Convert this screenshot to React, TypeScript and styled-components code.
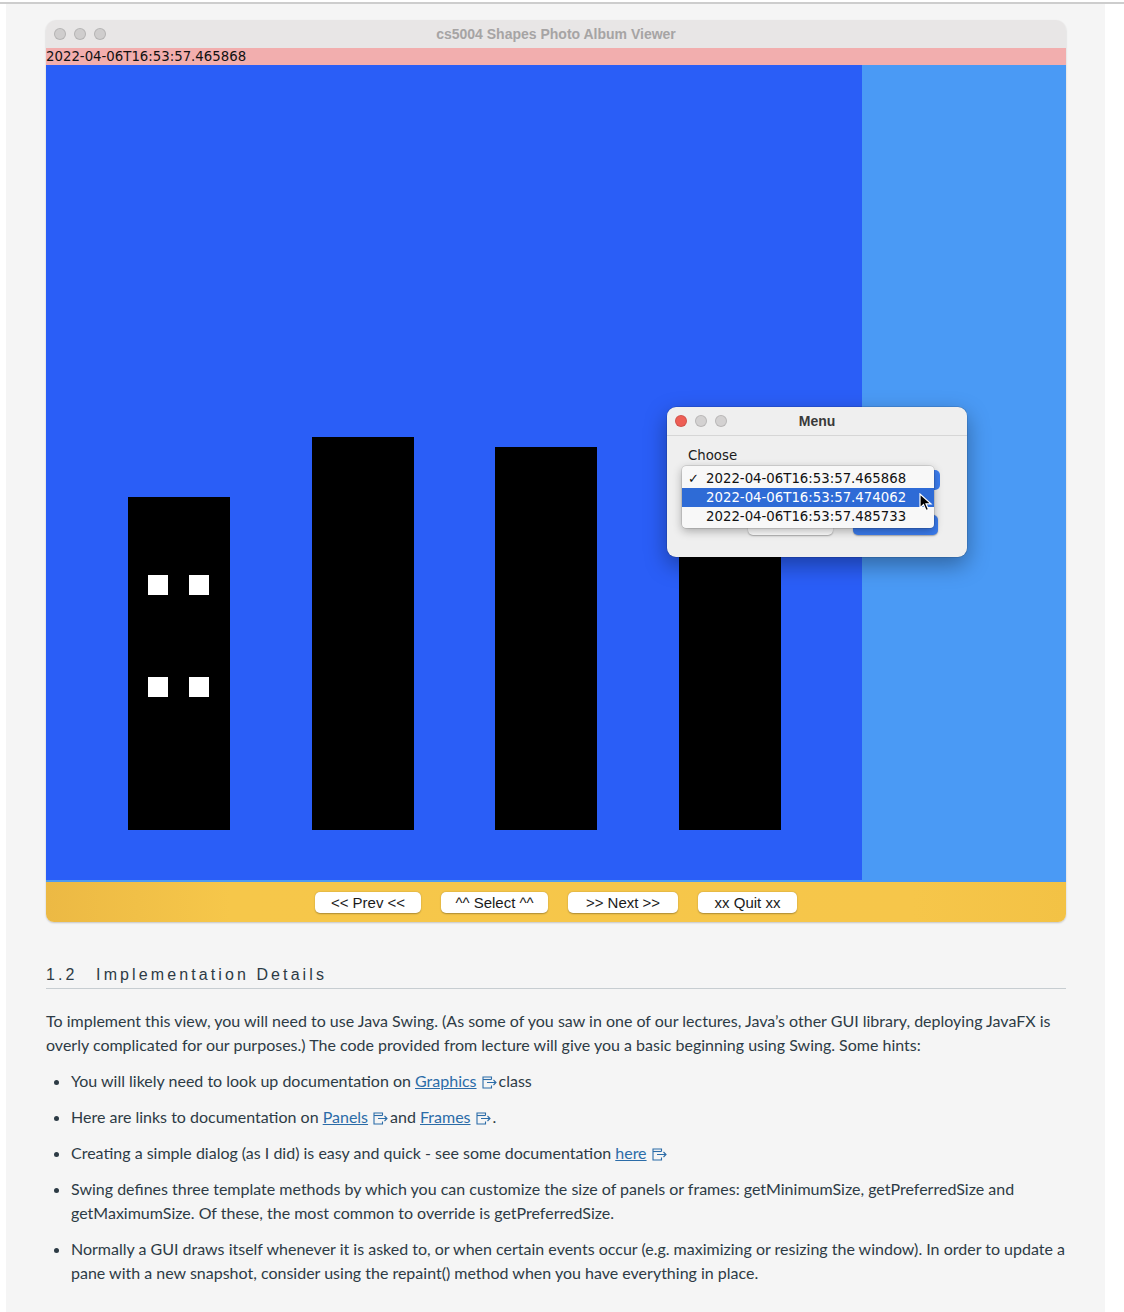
import React from "react";
import styled, { createGlobalStyle } from "styled-components";

const GlobalStyle = createGlobalStyle`
  html, body { margin: 0; padding: 0; background: #ffffff; }
  body { font-family: "Liberation Sans", Arial, sans-serif; }
  * { box-sizing: border-box; }
`;

const TopRule = styled.div`
  height: 2px;
  margin-top: 2px;
  background: #cdcdcd;
`;

const Panel = styled.main`
  margin-left: 6px;
  width: 1099px;
  min-height: calc(100vh - 4px);
  background: #f5f5f5;
  padding: 16px 39px 24px 40px;
`;

const Window = styled.div`
  width: 1020px;
  height: 902px;
  display: flex;
  flex-direction: column;
  border-radius: 10px 10px 8px 8px;
  overflow: hidden;
  box-shadow: 0 1px 2px rgba(0, 0, 0, 0.2);
`;

const TitleBar = styled.div`
  height: 28px;
  flex: none;
  background: #e8e6e6;
  display: flex;
  align-items: center;
  padding-left: 8px;
`;

const Lights = styled.div`
  display: flex;
  gap: 8px;
`;

const Light = styled.span<{ $color: string }>`
  width: 12px;
  height: 12px;
  border-radius: 50%;
  background: ${(p) => p.$color};
  border: 0.5px solid rgba(0, 0, 0, 0.12);
`;

const WindowTitle = styled.div`
  flex: 1;
  text-align: center;
  margin-right: 60px;
  font-size: 14px;
  font-weight: bold;
  color: #a6a4a4;
`;

const StatusBar = styled.div`
  height: 17px;
  flex: none;
  background: #f2aeae;
  font-family: "DejaVu Sans", sans-serif;
  font-size: 13.3px;
  line-height: 17px;
  color: #111;
`;

const Canvas = styled.div`
  flex: 1;
  display: grid;
  grid-template-columns: 816px 1fr;
  position: relative;
  border-bottom: 2px solid #4e9af2;
`;

const Scene = styled.div`
  background: #2a5ef7;
  display: flex;
  align-items: flex-end;
  gap: 81.5px;
  padding: 0 0 50px 82px;
`;

const SideArea = styled.div`
  background: #4a9af5;
`;

const Building = styled.div<{ $h: number }>`
  width: 102px;
  height: ${(p) => p.$h}px;
  background: #000;
  flex: none;
`;

const Windows = styled.div`
  display: grid;
  grid-template-columns: 20px 20px;
  grid-auto-rows: 20px;
  column-gap: 21px;
  row-gap: 82px;
  padding: 78px 0 0 20px;
`;

const Pane = styled.span`
  background: #fff;
`;

const BottomBar = styled.div`
  height: 40px;
  flex: none;
  background: linear-gradient(90deg, #ecb944 0%, #f6c74a 18%, #f6c64a 85%, #f3c245 100%);
  display: flex;
  justify-content: center;
  align-items: center;
  gap: 20px;
`;

const SwingButton = styled.button<{ $w: number }>`
  width: ${(p) => p.$w}px;
  height: 21px;
  border: none;
  border-radius: 5px;
  background: #ffffff;
  box-shadow: 0 0.5px 1.5px rgba(0, 0, 0, 0.3);
  font-family: "Liberation Sans", Arial, sans-serif;
  font-size: 15px;
  color: #1a1a1a;
  padding: 0;
`;

/* dialog overlay */
const Dialog = styled.div`
  position: absolute;
  left: 621px;
  top: 342px;
  width: 300px;
  height: 150px;
  background: #efefef;
  border-radius: 9px;
  box-shadow: 0 8px 22px rgba(0, 0, 0, 0.35), 0 0 0 0.5px rgba(0, 0, 0, 0.2);
`;

const DialogTitle = styled.div`
  height: 29px;
  display: flex;
  align-items: center;
  padding-left: 8px;
  border-bottom: 1px solid #d6d6d6;
`;

const DialogTitleText = styled.div`
  flex: 1;
  text-align: center;
  margin-right: 60px;
  font-size: 14px;
  font-weight: bold;
  color: #3a3a3a;
`;

const DialogBody = styled.div`
  padding: 11px 21px 0 21px;
  display: flex;
  flex-direction: column;
`;

const ChooseLabel = styled.div`
  font-family: "DejaVu Sans", sans-serif;
  font-size: 13.3px;
  color: #1c1c1c;
  line-height: 18px;
`;

const Combo = styled.div`
  margin: 5px 0 0 -6px;
  width: 258px;
  height: 20px;
  display: flex;
  justify-content: flex-end;
`;

const ComboArrow = styled.div`
  width: 16px;
  height: 20px;
  border-radius: 0 5px 5px 0;
  background: #3d7ef0;
`;

const DialogButtons = styled.div`
  margin-top: 25px;
  display: flex;
  gap: 20px;
  padding-left: 60px;
`;

const DlgButton = styled.div<{ $primary?: boolean }>`
  width: 85px;
  height: 20px;
  border-radius: 5px;
  background: ${(p) => (p.$primary ? "#3a7bed" : "#ffffff")};
  box-shadow: 0 0.5px 1.5px rgba(0, 0, 0, 0.3);
`;

const PopupList = styled.div`
  position: absolute;
  left: 15px;
  top: 59px;
  width: 252px;
  padding: 3px 0 2px;
  background: #f8f8f8;
  border-radius: 4px;
  box-shadow: 0 3px 10px rgba(0, 0, 0, 0.3), 0 0 0 0.5px rgba(0, 0, 0, 0.2);
`;

const ListRow = styled.div<{ $active?: boolean }>`
  height: 19px;
  display: flex;
  align-items: center;
  background: ${(p) => (p.$active ? "#2e6bd6" : "transparent")};
  color: ${(p) => (p.$active ? "#ffffff" : "#111111")};
  font-family: "DejaVu Sans", sans-serif;
  font-size: 13.3px;
`;

const Check = styled.span`
  width: 24px;
  padding-left: 6px;
  font-size: 13px;
`;

const Cursor = styled.svg`
  position: absolute;
  left: 252px;
  top: 86px;
`;

/* article */
const Heading = styled.h3`
  margin: 43px 0 0;
  padding-bottom: 3px;
  border-bottom: 1px solid #c7cdd1;
  font-family: "Liberation Sans", Arial, sans-serif;
  font-weight: normal;
  font-size: 16px;
  line-height: 20px;
  letter-spacing: 3.1px;
  color: #2d3b45;
`;

const SectionNum = styled.span`
  margin-right: 11px;
`;

const Paragraph = styled.p`
  margin: 20px 0 0;
  font-family: Lato, "Open Sans", sans-serif;
  font-size: 16px;
  line-height: 24px;
  color: #2d3b45;
`;

const List = styled.ul`
  margin: 12px 0 0;
  padding-left: 25px;
  font-family: Lato, "Open Sans", sans-serif;
  font-size: 16px;
  line-height: 24px;
  color: #2d3b45;
  li { margin-bottom: 12px; }
`;

const Link = styled.a`
  color: #2b6ca8;
  text-decoration: underline;
`;

const ExtIcon = styled.svg`
  margin: 0 1px 0 5px;
  vertical-align: -2px;
`;

const External = () => (
  <ExtIcon width="16" height="13" viewBox="0 0 16 13" fill="none" stroke="#2b6ca8" strokeWidth="1.1">
    <path d="M9.5 3.5 V1 H1 V12 H9.5 V9.5" />
    <path d="M1 3.5 H9.5" />
    <path d="M5 6.5 H14 M11.5 4 L14 6.5 L11.5 9" />
  </ExtIcon>
);

const ExtLink: React.FC<{ children: React.ReactNode }> = ({ children }) => (
  <>
    <Link href="#">{children}</Link>
    <Link href="#">
      <External />
    </Link>
  </>
);

const buttons = [
  { label: "<< Prev <<", w: 106 },
  { label: "^^ Select ^^", w: 107 },
  { label: ">> Next >>", w: 110 },
  { label: "xx Quit xx", w: 99 },
];

const stamps = [
  "2022-04-06T16:53:57.465868",
  "2022-04-06T16:53:57.474062",
  "2022-04-06T16:53:57.485733",
];

export default function App() {
  return (
    <>
      <GlobalStyle />
      <TopRule />
      <Panel>
        <Window>
          <TitleBar>
            <Lights>
              <Light $color="#cfcdcd" />
              <Light $color="#cfcdcd" />
              <Light $color="#cfcdcd" />
            </Lights>
            <WindowTitle>cs5004 Shapes Photo Album Viewer</WindowTitle>
          </TitleBar>
          <StatusBar>2022-04-06T16:53:57.465868</StatusBar>
          <Canvas>
            <Scene>
              <Building $h={333}>
                <Windows>
                  <Pane />
                  <Pane />
                  <Pane />
                  <Pane />
                </Windows>
              </Building>
              <Building $h={393} />
              <Building $h={383} />
              <Building $h={300} />
            </Scene>
            <SideArea />
            <Dialog>
              <DialogTitle>
                <Lights>
                  <Light $color="#ee5e55" />
                  <Light $color="#d3d1d1" />
                  <Light $color="#d3d1d1" />
                </Lights>
                <DialogTitleText>Menu</DialogTitleText>
              </DialogTitle>
              <DialogBody>
                <ChooseLabel>Choose</ChooseLabel>
                <Combo>
                  <ComboArrow />
                </Combo>
                <DialogButtons>
                  <DlgButton />
                  <DlgButton $primary />
                </DialogButtons>
              </DialogBody>
              <PopupList>
                {stamps.map((s, i) => (
                  <ListRow key={s} $active={i === 1}>
                    <Check>{i === 0 ? "✓" : ""}</Check>
                    {s}
                  </ListRow>
                ))}
              </PopupList>
              <Cursor width="14" height="20" viewBox="0 0 14 20">
                <path d="M1 1 L1 15 L4.5 11.5 L7 17.5 L9.5 16.5 L7 10.8 L12 10.8 Z" fill="#000" stroke="#fff" strokeWidth="1.2" />
              </Cursor>
            </Dialog>
          </Canvas>
          <BottomBar>
            {buttons.map((b) => (
              <SwingButton key={b.label} $w={b.w}>
                {b.label}
              </SwingButton>
            ))}
          </BottomBar>
        </Window>

        <Heading>
          <SectionNum>1.2</SectionNum> Implementation Details
        </Heading>
        <Paragraph>
          To implement this view, you will need to use Java Swing. (As some of you saw in one of our lectures, Java’s other GUI
          library, deploying JavaFX is overly complicated for our purposes.) The code provided from lecture will give you a basic
          beginning using Swing. Some hints:
        </Paragraph>
        <List>
          <li>
            You will likely need to look up documentation on <ExtLink>Graphics</ExtLink>class
          </li>
          <li>
            Here are links to documentation on <ExtLink>Panels</ExtLink>and <ExtLink>Frames</ExtLink>.
          </li>
          <li>
            Creating a simple dialog (as I did) is easy and quick - see some documentation <ExtLink>here</ExtLink>
          </li>
          <li>
            Swing defines three template methods by which you can customize the size of panels or frames: getMinimumSize,
            getPreferredSize and getMaximumSize. Of these, the most common to override is getPreferredSize.
          </li>
          <li>
            Normally a GUI draws itself whenever it is asked to, or when certain events occur (e.g. maximizing or resizing the
            window). In order to update a pane with a new snapshot, consider using the repaint() method when you have everything
            in place.
          </li>
        </List>
      </Panel>
    </>
  );
}
